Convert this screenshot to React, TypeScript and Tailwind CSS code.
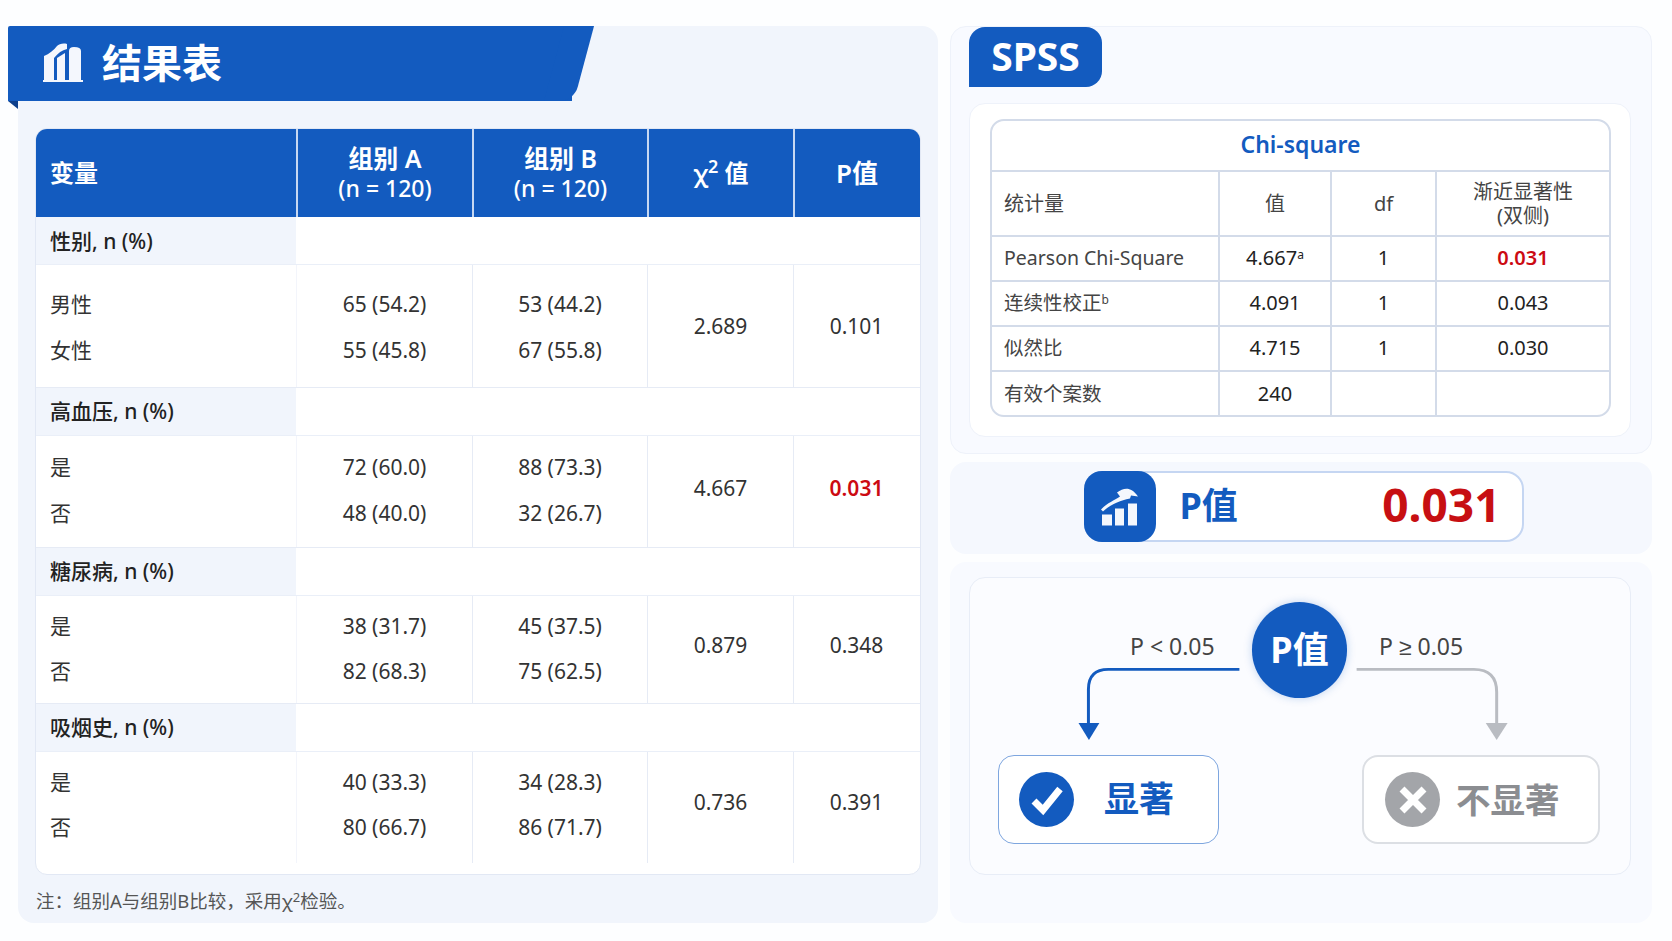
const font = "font-['Noto_Sans','Noto_Sans_CJK_SC',sans-serif]";

const groups = [
  {
    title: "性别, n (%)",
    h: "h-[122px]",
    row: "h-[46px]",
    labelPad: "pt-[2px]",
    pad: "pt-[3px]",
    chiPad: "pt-[1px]",
    rows: [
      ["男性", "65 (54.2)", "53 (44.2)"],
      ["女性", "55 (45.8)", "67 (55.8)"],
    ],
    chi: "2.689",
    p: "0.101",
  },
  {
    title: "高血压, n (%)",
    h: "h-[111px]",
    row: "h-[46px]",
    labelPad: "pt-0",
    pad: "pb-[2px]",
    chiPad: "pb-[6px]",
    rows: [
      ["是", "72 (60.0)", "88 (73.3)"],
      ["否", "48 (40.0)", "32 (26.7)"],
    ],
    chi: "4.667",
    p: "0.031",
    red: true,
  },
  {
    title: "糖尿病, n (%)",
    h: "h-[107px]",
    row: "h-[45px]",
    labelPad: "pt-0",
    pad: "pb-[1px]",
    chiPad: "pb-[7px]",
    rows: [
      ["是", "38 (31.7)", "45 (37.5)"],
      ["否", "82 (68.3)", "75 (62.5)"],
    ],
    chi: "0.879",
    p: "0.348",
  },
  {
    title: "吸烟史, n (%)",
    h: "h-[111px]",
    row: "h-[45px]",
    labelPad: "pt-0",
    pad: "pb-[5px]",
    chiPad: "pb-[9px]",
    rows: [
      ["是", "40 (33.3)", "34 (28.3)"],
      ["否", "80 (66.7)", "86 (71.7)"],
    ],
    chi: "0.736",
    p: "0.391",
  },
];

const cols = "grid grid-cols-[260px_176px_175px_146px_126px]";

function BannerIcon() {
  return (
    <svg viewBox="0 0 40 40" className="w-[40px] h-[40px]" fill="#f4f7fd">
      <path d="M1 38V13C6 11 11 7 14 3C16 1 20 0 24 1V6C19 7 15 10 11 15V38Z" />
      <path d="M14 38V15L22 10V38Z" />
      <path d="M26 38V8Q26 4 31 4Q38 4 38 8V38Z" />
      <rect x="0" y="37" width="40" height="2" />
    </svg>
  );
}

function TrendIcon() {
  return (
    <svg viewBox="0 0 72 70" className="w-[72px] h-[71px]" fill="#f4f7fd">
      <path d="M18 43h10v11H18z" />
      <path d="M31 37h9v17h-9z" />
      <path d="M44 32h9v22h-9z" />
      <path d="M17 38C24 31 30 29 36 25L33 21C40 16 47 15 54 25L47 24L46 27C41 28 37 29 33 31C28 33 23 36 19 40Z" />
    </svg>
  );
}

function ResultTable() {
  return (
    <div className="ml-[17px] mr-[17px] mt-[27px] h-[747px] rounded-[12px] border border-[#e2e8f4] bg-white overflow-hidden">
      <div className={`${cols} h-[88px] bg-[#135bbf] text-white font-semibold`}>
        <div className="flex items-center pl-[14px] text-[24px]">变量</div>
        <div className="flex flex-col items-center justify-center text-center border-l-2 border-[#c6d8f2]">
          <div className="text-[25px] leading-[30px]">组别 A</div>
          <div className="text-[23px] leading-[30px] font-medium">(n = 120)</div>
        </div>
        <div className="flex flex-col items-center justify-center text-center border-l-2 border-[#c6d8f2]">
          <div className="text-[25px] leading-[30px]">组别 B</div>
          <div className="text-[23px] leading-[30px] font-medium">(n = 120)</div>
        </div>
        <div className="flex items-center justify-center border-l-2 border-[#c6d8f2] text-[24px]">
          <span>
            χ<sup>2</sup> 值
          </span>
        </div>
        <div className="flex items-center justify-center border-l-2 border-[#c6d8f2] text-[26px]">P值</div>
      </div>

      {groups.map((g, i) => (
        <div key={g.title} className={i > 0 ? "border-t border-[#e6ebf5]" : ""}>
          <div className={`${cols} h-[48px] border-b border-[#eaeff8]`}>
            <div
              className={`flex items-center pl-[14px] bg-[#f1f5fc] text-[21px] font-medium text-[#222] ${g.labelPad}`}
            >
              {g.title}
            </div>
          </div>
          <div className={`${cols} ${g.h} text-[21px] text-[#333]`}>
            <div className={`flex flex-col justify-center pl-[14px] ${g.pad}`}>
              {g.rows.map((r) => (
                <div key={r[0]} className={`${g.row} flex items-center`}>
                  {r[0]}
                </div>
              ))}
            </div>
            <div className={`flex flex-col justify-center items-center border-l border-[#f3f5fb] ${g.pad}`}>
              {g.rows.map((r) => (
                <div key={r[1]} className={`${g.row} flex items-center`}>
                  {r[1]}
                </div>
              ))}
            </div>
            <div className={`flex flex-col justify-center items-center border-l border-[#e6ebf5] ${g.pad}`}>
              {g.rows.map((r) => (
                <div key={r[2]} className={`${g.row} flex items-center`}>
                  {r[2]}
                </div>
              ))}
            </div>
            <div className={`flex items-center justify-center border-l border-[#e6ebf5] ${g.chiPad}`}>{g.chi}</div>
            <div
              className={`flex items-center justify-center border-l border-[#e6ebf5] ${g.chiPad} ${
                g.red ? "text-[#cc0a12] font-semibold" : ""
              }`}
            >
              {g.p}
            </div>
          </div>
        </div>
      ))}
    </div>
  );
}

const chiCols = "grid grid-cols-[226px_112px_105px_1fr]";
const chiCell = "flex items-center justify-center border-l-2 border-[#d3dbe9]";

const chiRows = [
  { a: <>Pearson Chi-Square</>, b: <>4.667<sup className="text-[12px]">a</sup></>, c: "1", d: "0.031", red: true },
  { a: <>连续性校正<sup className="text-[12px]">b</sup></>, b: <>4.091</>, c: "1", d: "0.043" },
  { a: <>似然比</>, b: <>4.715</>, c: "1", d: "0.030" },
  { a: <>有效个案数</>, b: <>240</>, c: "", d: "" },
];

function ChiTable() {
  return (
    <div className="rounded-[14px] border-2 border-[#d3dbe9] overflow-hidden text-[20px] text-[#222]">
      <div className="h-[49px] pb-[2px] flex items-center justify-center text-[23px] font-semibold text-[#135bbf]">
        Chi-square
      </div>
      <div className={`${chiCols} h-[65px] border-t-2 border-[#d3dbe9] leading-[24px] text-[#444]`}>
        <div className="flex items-center pl-[12px]">统计量</div>
        <div className={chiCell}>值</div>
        <div className={chiCell}>df</div>
        <div className={`${chiCell} text-center`}>
          <div>
            渐近显著性
            <br />
            (双侧)
          </div>
        </div>
      </div>
      {chiRows.map((r, i) => (
        <div key={i} className={`${chiCols} h-[45px] border-t-2 border-[#d3dbe9] ${i < 3 ? "[&>div]:pb-[2px]" : ""}`}>
          <div className="flex items-center pl-[12px] text-[#444] text-[19.5px]">
            <span>{r.a}</span>
          </div>
          <div className={chiCell}>
            <span>{r.b}</span>
          </div>
          <div className={chiCell}>{r.c}</div>
          <div className={`${chiCell} ${r.red ? "text-[#cc0a12] font-semibold" : ""}`}>{r.d}</div>
        </div>
      ))}
    </div>
  );
}

function Decision() {
  return (
    <div className="relative h-[298px] rounded-[16px] border border-[#e8edf7] bg-[#fbfcff] ml-[19px] mr-[21px] mt-[15px]">
      <svg className="absolute inset-0 w-full h-full" viewBox="0 0 662 298" fill="none">
        <path d="M270 92H138Q118 92 118 112V150" stroke="#135bbf" strokeWidth="3" />
        <path d="M108 146H129L118.500 163Z" fill="#135bbf" />
        <path d="M388 92H506Q529 92 529 115V150" stroke="#b9bcc2" strokeWidth="3" />
        <path d="M518 146H540L529 163Z" fill="#b9bcc2" />
      </svg>

      <div className="absolute left-[282px] top-[24px] w-[95px] h-[96px] rounded-full bg-[#135bbf] text-white text-[36px] font-bold flex items-center justify-center shadow-[0_0_8px_rgba(19,91,191,0.25)]">
        P值
      </div>
      <div className="absolute left-[160px] top-[53px] text-[23px] leading-[30px] text-[#444]">P &lt; 0.05</div>
      <div className="absolute left-[409px] top-[53px] text-[23px] leading-[30px] text-[#444]">
        P <span className="font-['Liberation_Sans',sans-serif]">≥</span> 0.05
      </div>

      <div className="absolute left-[28px] top-[177px] w-[221px] h-[89px] rounded-[16px] border-[1.5px] border-[#7ea6df] bg-white flex items-center pl-[20px]">
        <div className="w-[55px] h-[55px] rounded-full bg-[#135bbf] flex items-center justify-center">
          <svg viewBox="0 0 40 40" className="w-[40px] h-[40px]" fill="none">
            <path d="M7 21L16 30L33 9" stroke="white" strokeWidth="7" />
          </svg>
        </div>
        <span className="ml-[30px] text-[35px] font-bold text-[#135bbf]">显著</span>
      </div>

      <div className="absolute left-[392px] top-[177px] w-[238px] h-[89px] rounded-[16px] border-2 border-[#dcdfe4] bg-white flex items-center pl-[21px]">
        <div className="w-[55px] h-[55px] rounded-full bg-[#a3a5a9] flex items-center justify-center">
          <svg viewBox="0 0 40 40" className="w-[40px] h-[40px]" fill="none">
            <path d="M9 9L31 31M31 9L9 31" stroke="white" strokeWidth="7" />
          </svg>
        </div>
        <span className="ml-[16px] text-[34.5px] font-bold text-[#8b8d91]">不显著</span>
      </div>
    </div>
  );
}

export default function App() {
  return (
    <div className={`${font} w-[1672px] h-[941px] bg-[#fdfeff] pl-[18px] pt-[26px] flex gap-[12px] overflow-hidden`}>
      <section className="w-[920px] h-[897px] rounded-[16px] bg-[#f1f5fc] flex flex-col">
        <div className="relative -ml-[10px] w-[564px] h-[75px] pb-[2px] bg-[#135bbf] rounded-tl-[2px] flex items-center pl-[35px] gap-[19px] text-white">
          <div className="absolute top-0 -right-[12px] w-[30px] h-full bg-[#135bbf] -skew-x-[15deg] rounded-br-[14px]" />
          <div className="absolute top-full left-0 w-[10px] h-[8px] bg-[#0d3f8c] [clip-path:polygon(0_0,100%_0,100%_100%)]" />
          <BannerIcon />
          <span className="relative text-[40px] font-bold leading-none">结果表</span>
        </div>
        <ResultTable />
        <p className="mx-[18px] mt-[14px] text-[18.5px] leading-[24px] text-[#555]">
          注：组别A与组别B比较，采用χ<sup className="text-[13px]">2</sup>检验。
        </p>
      </section>

      <div className="w-[702px] h-[897px] flex flex-col gap-[8px]">
        <section className="h-[428px] rounded-[16px] bg-[#f8faff] border border-[#eef2fa] flex flex-col">
          <div className="ml-[18px] w-[133px] h-[60px] pb-[1px] bg-[#135bbf] rounded-tl-[16px] rounded-tr-[16px] rounded-br-[16px] flex items-center justify-center text-[39px] font-bold text-white">
            SPSS
          </div>
          <div className="ml-[18px] mr-[20px] mt-[16px] h-[334px] rounded-[16px] border border-[#eef2fa] bg-white pl-[20px] pr-[19px] pt-[15px]">
            <ChiTable />
          </div>
        </section>

        <section className="h-[92px] rounded-[16px] bg-[#f5f8fe] flex items-center justify-center">
          <div className="w-[440px] h-[71px] ml-[5px] mb-[4px] rounded-[18px] border-2 border-[#c5d6f2] bg-white flex items-center">
            <div className="-ml-[2px] w-[72px] h-[71px] rounded-[18px] bg-[#135bbf]">
              <TrendIcon />
            </div>
            <span className="ml-[24px] text-[36px] font-bold text-[#135bbf]">P值</span>
            <span className="ml-auto mr-[21px] pb-[4px] text-[46px] font-bold text-[#c70f12]">0.031</span>
          </div>
        </section>

        <section className="flex-1 rounded-[16px] bg-[#f8faff]">
          <Decision />
        </section>
      </div>
    </div>
  );
}
